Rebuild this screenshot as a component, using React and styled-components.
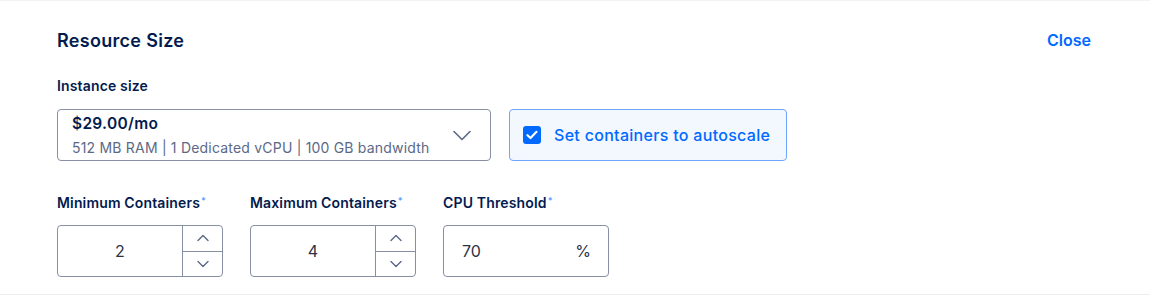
import React from 'react';
import styled, { createGlobalStyle } from 'styled-components';

const GlobalStyle = createGlobalStyle`
  body {
    margin: 0;
    background: #ffffff;
    font-family: Inter, "Noto Sans", sans-serif;
    color: #031b4e;
  }
`;

const Panel = styled.section`
  box-sizing: border-box;
  height: 295px;
  border-top: 1px solid #f2f3f5;
  border-bottom: 1px solid #eceef1;
  padding: 27px 59px 0 57px;
`;

const Header = styled.div`
  display: flex;
  justify-content: space-between;
  align-items: center;
  height: 24px;
`;

const Title = styled.h2`
  margin: 0;
  font-size: 18px;
  font-weight: 600;
  letter-spacing: 0.3px;
  color: #031b4e;
`;

const LinkButton = styled.button`
  border: none;
  background: none;
  padding: 0;
  font-family: inherit;
  font-size: 16px;
  font-weight: 600;
  color: #0069ff;
  cursor: pointer;
`;

const Label = styled.div`
  font-size: 14px;
  font-weight: 600;
  letter-spacing: 0.15px;
  color: #031b4e;
  line-height: 18px;
  margin-bottom: ${p => p.$gap || 13}px;
`;

const Req = styled.sup`
  color: #5c9cff;
  font-size: 9px;
  margin-left: 1px;
  vertical-align: 4px;
`;

const Section = styled.div`
  margin-top: ${p => p.$top}px;
`;

const Row = styled.div`
  display: flex;
  gap: ${p => p.$gap}px;
`;

const Select = styled.div`
  box-sizing: border-box;
  width: 434px;
  height: 52px;
  border: 1px solid #8690a2;
  border-radius: 4px;
  display: flex;
  align-items: center;
  justify-content: space-between;
  padding: 0 19px 0 14px;
`;

const SelectText = styled.div`
  display: flex;
  flex-direction: column;
  gap: 6px;
`;

const Price = styled.div`
  font-size: 15.5px;
  font-weight: 600;
  letter-spacing: 0.3px;
  color: #031b4e;
`;

const Specs = styled.div`
  font-size: 14px;
  letter-spacing: 0.2px;
  color: #5b6987;
`;

const CheckBox = styled.label`
  box-sizing: border-box;
  width: 278px;
  height: 52px;
  border: 1px solid #6ea5ff;
  border-radius: 4px;
  background: #f3f8ff;
  display: flex;
  align-items: center;
  gap: 13px;
  padding-left: 13px;
  font-size: 16px;
  font-weight: 500;
  letter-spacing: 0.3px;
  color: #0069ff;
`;

const Box = styled.span`
  width: 18px;
  height: 18px;
  border-radius: 3px;
  background: #0069ff;
  display: flex;
  align-items: center;
  justify-content: center;
`;

const Field = styled.div`
  width: 166px;
`;

const InputShell = styled.div`
  box-sizing: border-box;
  width: 166px;
  height: 52px;
  border: 1px solid #8690a2;
  border-radius: 4px;
  display: flex;
`;

const Value = styled.div`
  flex: 1;
  display: flex;
  align-items: center;
  justify-content: ${p => (p.$center ? 'center' : 'space-between')};
  padding: ${p => (p.$center ? '0' : '0 17px 0 18px')};
  font-size: 16px;
  color: #2b3245;
`;

const Spinner = styled.div`
  width: 39px;
  border-left: 1px solid #8690a2;
  display: flex;
  flex-direction: column;
`;

const SpinButton = styled.div`
  flex: 1;
  display: flex;
  align-items: center;
  justify-content: center;
  & + & {
    border-top: 1px solid #8690a2;
  }
`;

const Chevron = ({ up, size = 10, w = 1.4 }) => (
  <svg width={size + 2} height={size / 2 + 3} viewBox={`-1 -1 ${size + 2} ${size / 2 + 3}`}>
    <path
      d={up ? `M0 ${size / 2 + 0.5} L${size / 2} 0.5 L${size} ${size / 2 + 0.5}` : `M0 0.5 L${size / 2} ${size / 2 + 0.5} L${size} 0.5`}
      fill="none"
      stroke="#5b6987"
      strokeWidth={w}
      strokeLinecap="round"
      strokeLinejoin="round"
    />
  </svg>
);

const Stepper = ({ label, value }) => (
  <Field>
    <Label>
      {label}
      <Req>*</Req>
    </Label>
    <InputShell>
      <Value $center>{value}</Value>
      <Spinner>
        <SpinButton>
          <Chevron up />
        </SpinButton>
        <SpinButton>
          <Chevron />
        </SpinButton>
      </Spinner>
    </InputShell>
  </Field>
);

export default function App() {
  return (
    <>
      <GlobalStyle />
      <Panel>
        <Header>
          <Title>Resource Size</Title>
          <LinkButton>Close</LinkButton>
        </Header>
        <Section $top={25}>
          <Label $gap={14}>Instance size</Label>
          <Row $gap={18}>
            <Select>
              <SelectText>
                <Price>$29.00/mo</Price>
                <Specs>512 MB RAM | 1 Dedicated vCPU | 100 GB bandwidth</Specs>
              </SelectText>
              <Chevron size={16} w={1.6} />
            </Select>
            <CheckBox>
              <Box>
                <svg width="12" height="10" viewBox="0 0 12 10">
                  <path d="M1.5 5.2 L4.5 8 L10.5 1.8" fill="none" stroke="#fff" strokeWidth="2.2" strokeLinecap="round" strokeLinejoin="round" />
                </svg>
              </Box>
              Set containers to autoscale
            </CheckBox>
          </Row>
        </Section>
        <Section $top={31}>
          <Row $gap={27}>
            <Stepper label="Minimum Containers" value="2" />
            <Stepper label="Maximum Containers" value="4" />
            <Field>
              <Label>
                CPU Threshold
                <Req>*</Req>
              </Label>
              <InputShell>
                <Value>
                  <span>70</span>
                  <span>%</span>
                </Value>
              </InputShell>
            </Field>
          </Row>
        </Section>
      </Panel>
    </>
  );
}
